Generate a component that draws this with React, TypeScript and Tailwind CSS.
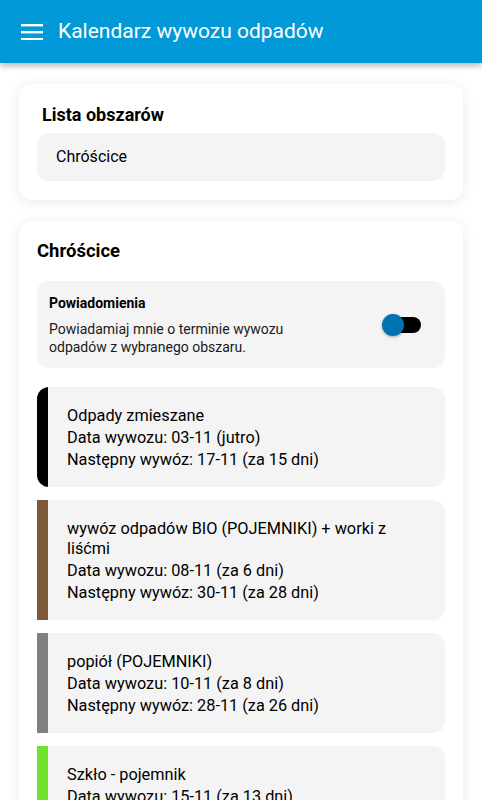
import React from "react";

type Item = { color: string; name: string; date: string; next: string; rounded?: boolean };

const items: Item[] = [
  { color: "bg-black", name: "Odpady zmieszane", date: "Data wywozu: 03-11 (jutro)", next: "Następny wywóz: 17-11 (za 15 dni)", rounded: true },
  { color: "bg-[#7d5a3c]", name: "wywóz odpadów BIO (POJEMNIKI) + worki z liśćmi", date: "Data wywozu: 08-11 (za 6 dni)", next: "Następny wywóz: 30-11 (za 28 dni)" },
  { color: "bg-[#808080]", name: "popiół (POJEMNIKI)", date: "Data wywozu: 10-11 (za 8 dni)", next: "Następny wywóz: 28-11 (za 26 dni)" },
  { color: "bg-[#6fe22b]", name: "Szkło - pojemnik", date: "Data wywozu: 15-11 (za 13 dni)", next: "Następny wywóz: 13-12 (za 41 dni)" },
];

export default function App() {
  return (
    <div
      className="w-[482px] h-[800px] overflow-hidden bg-white text-black"
      style={{ fontFamily: "Roboto, 'Liberation Sans', sans-serif" }}
    >
      <header className="relative z-10 h-[63px] bg-[#0199d7] flex items-center shadow-[0_3px_6px_rgba(0,0,0,0.28)]">
        <svg className="ml-[21px]" width="22" height="16" viewBox="0 0 22 16">
          <rect x="0" y="0" width="22" height="2.4" fill="white" />
          <rect x="0" y="7" width="22" height="2.4" fill="white" />
          <rect x="0" y="14" width="22" height="2.4" fill="white" />
        </svg>
        <h1 className="ml-[15px] text-[21px] text-white font-normal leading-none">Kalendarz wywozu odpadów</h1>
      </header>

      <main className="px-[19px] pt-[21px] flex flex-col gap-[21px]">
        <section className="bg-white rounded-[13px] shadow-[0_2px_14px_rgba(0,0,0,0.09)] px-[18px] pt-[19px] pb-[19px]">
          <h2 className="px-[5px] text-[18px] leading-[24px] font-bold">Lista obszarów</h2>
          <div className="mt-[6px] h-[48px] rounded-[12px] bg-[#f4f4f4] flex items-center pl-[19px] text-[16px]">
            Chróścice
          </div>
        </section>

        <section className="bg-white rounded-[13px] shadow-[0_2px_14px_rgba(0,0,0,0.09)] px-[18px] pt-[18px] pb-[19px]">
          <h2 className="text-[18.5px] leading-[24px] font-bold">Chróścice</h2>
          <div className="mt-[18px] rounded-[12px] bg-[#f4f4f4] pl-3 pr-6 py-3 flex items-center gap-3">
            <div className="flex-1">
              <div className="text-[14px] leading-[20px] font-bold">Powiadomienia</div>
              <div className="mt-[7px] max-w-[280px] text-[14px] leading-[18px] text-[#1a1a1a]">
                Powiadamiaj mnie o terminie wywozu odpadów z wybranego obszaru.
              </div>
            </div>
            <div className="relative w-[39px] h-[22px] shrink-0">
              <div className="absolute right-0 top-[3px] w-[34px] h-4 rounded-full bg-black" />
              <div className="absolute left-0 top-0 w-[22px] h-[22px] rounded-full bg-[#0071b1] shadow-[0_1px_3px_rgba(0,0,0,0.35)]" />
            </div>
          </div>

          <div className="mt-[19px] flex flex-col gap-[13px]">
            {items.map((it, i) => (
              <div
                key={i}
                className={
                  "flex bg-[#f4f4f4] overflow-hidden " +
                  (it.rounded ? "rounded-[12px]" : "rounded-r-[12px]")
                }
              >
                <div className={"w-[11px] shrink-0 " + it.color} />
                <div className="pl-[19px] pr-[50px] pt-[19px] pb-[17px] flex flex-col gap-[2px] text-[16.3px] leading-[20px]">
                  <div>{it.name}</div>
                  <div>{it.date}</div>
                  <div>{it.next}</div>
                </div>
              </div>
            ))}
          </div>
        </section>
      </main>
    </div>
  );
}
